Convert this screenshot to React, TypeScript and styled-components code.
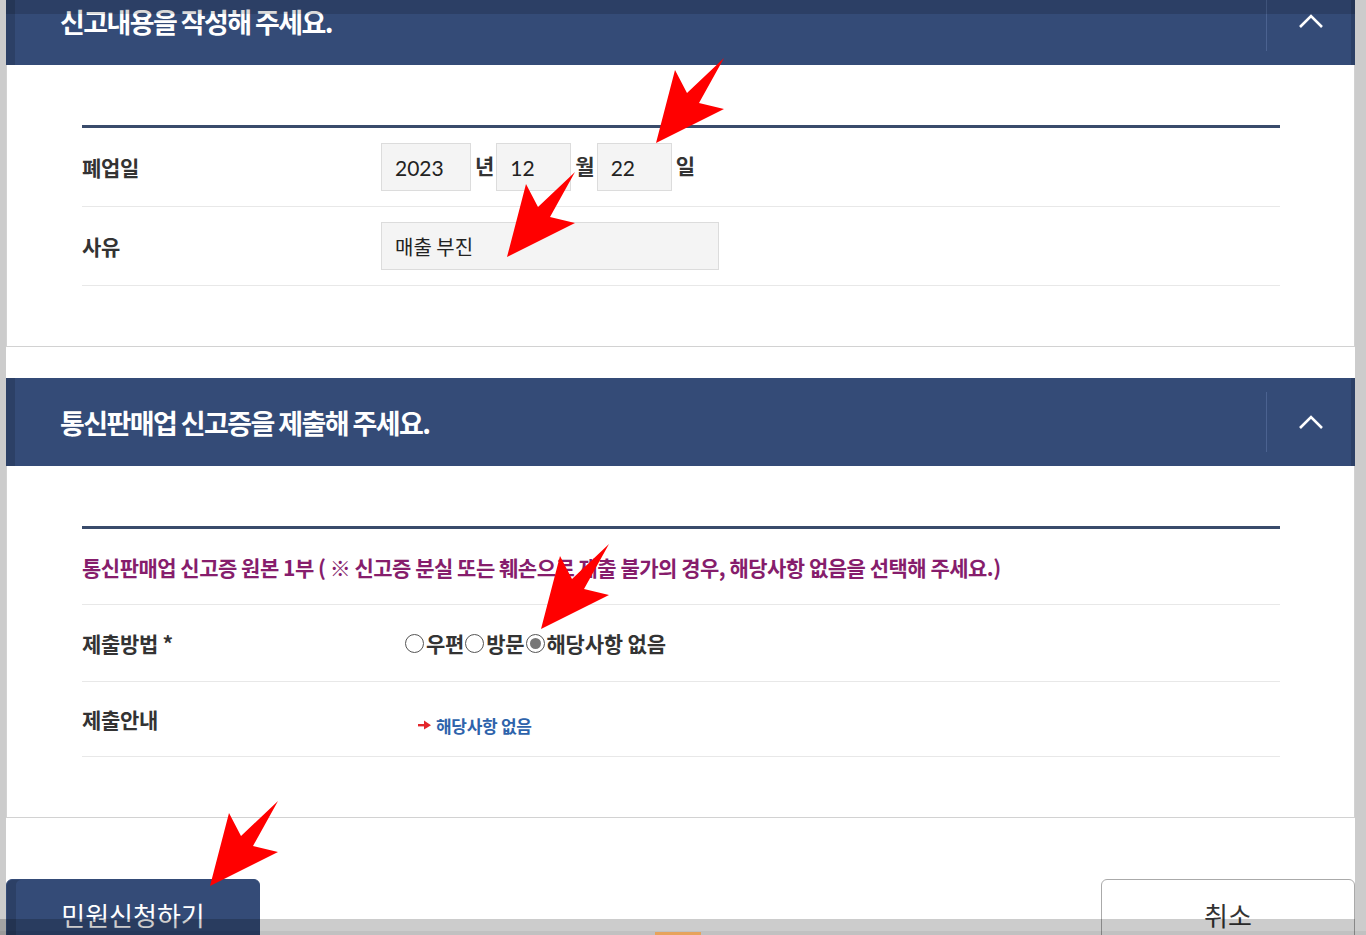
import React from "react";
import styled, { createGlobalStyle } from "styled-components";

const GlobalStyle = createGlobalStyle`
  html, body {
    margin: 0;
    padding: 0;
    background: #ffffff;
    overflow: hidden;
  }
  body {
    font-family: "Noto Sans CJK KR", "Noto Sans", sans-serif;
    color: #333;
  }
  * {
    box-sizing: border-box;
  }
`;

const Screen = styled.div`
  position: relative;
  width: 1366px;
  height: 935px;
  overflow: hidden;
`;

const Page = styled.div`
  width: 1349px;
  margin: -23px 0 0 6px;
  background: #fff;
`;

const Section = styled.section`
  margin-bottom: 31px;
`;

const SectionHead = styled.div`
  height: 88px;
  display: flex;
  align-items: center;
  justify-content: space-between;
  padding-left: 54px;
  background: #344b77;
  box-shadow: inset 9px 0 0 rgba(0, 0, 0, 0.14), inset -4px 0 0 rgba(0, 0, 0, 0.14);
`;

const SectionTitle = styled.h2`
  margin: 0;
  color: #fff;
  font-size: 27px;
  font-weight: 700;
  letter-spacing: -1.6px;
`;

const Toggle = styled.button`
  width: 89px;
  height: 60px;
  display: flex;
  align-items: center;
  justify-content: center;
  padding: 0;
  background: none;
  border: none;
  border-left: 1px solid #4b6290;
  cursor: pointer;
`;

const SectionBody = styled.div`
  border: 1px solid #d2d2d2;
  border-top: none;
  padding: 60px 74px 60px 75px;
`;

const Table = styled.div`
  border-top: 3px solid #394b6b;
`;

const Row = styled.div<{ $h: number }>`
  display: grid;
  grid-template-columns: 299px 1fr;
  align-items: center;
  height: ${(p) => p.$h}px;
  border-bottom: 1px solid #e8e8e8;
`;

const NoticeRow = styled.div`
  display: flex;
  align-items: center;
  height: 76px;
  border-bottom: 1px solid #e8e8e8;
  color: #861d6c;
  font-size: 21px;
  font-weight: 700;
  letter-spacing: -0.5px;
`;

const Label = styled.div`
  font-size: 21px;
  font-weight: 700;
  color: #333;
  letter-spacing: -0.3px;
`;

const Field = styled.div<{ $indent?: number }>`
  display: flex;
  align-items: center;
  padding-left: ${(p) => p.$indent ?? 0}px;
`;

const TextBox = styled.div<{ $w: number; $latin?: boolean }>`
  width: ${(p) => p.$w}px;
  height: 48px;
  display: flex;
  align-items: center;
  padding-left: 13px;
  background: #f4f4f4;
  border: 1px solid #dcdcdc;
  font-family: ${(p) =>
    p.$latin ? `"Lato", "Noto Sans CJK KR", sans-serif` : `"Noto Sans CJK KR", sans-serif`};
  font-size: ${(p) => (p.$latin ? 21 : 20)}px;
  color: #222;
`;

const Unit = styled.span`
  font-size: 21px;
  font-weight: 700;
  color: #333;
  margin: 0 2px 0 4px;
  position: relative;
  top: -2px;
`;

const RadioGroup = styled.div`
  display: flex;
  align-items: center;
  font-size: 21px;
  font-weight: 700;
  color: #333;
  letter-spacing: -0.2px;
`;

const RadioMark = styled.span<{ $checked?: boolean }>`
  width: 19px;
  height: 19px;
  margin: 0 2px 0 1px;
  border-radius: 50%;
  border: 1.5px solid #555;
  display: inline-flex;
  align-items: center;
  justify-content: center;
  &::after {
    content: "";
    width: 11px;
    height: 11px;
    border-radius: 50%;
    background: ${(p) => (p.$checked ? "#777" : "transparent")};
  }
`;

const GuideLink = styled.span`
  display: inline-flex;
  align-items: center;
  gap: 5px;
  color: #2e63ab;
  font-size: 17px;
  font-weight: 700;
  letter-spacing: -0.3px;
  margin-top: 12px;
`;

const Actions = styled.div`
  display: flex;
  justify-content: space-between;
  margin-top: 61px;
`;

const ActionButton = styled.button<{ $primary?: boolean }>`
  width: 254px;
  height: 72px;
  border-radius: 6px;
  font-family: "Noto Sans CJK KR", sans-serif;
  font-size: 26px;
  padding-top: 0;
  cursor: pointer;
  color: ${(p) => (p.$primary ? "#fff" : "#333")};
  background: ${(p) => (p.$primary ? "#344b77" : "#fff")};
  border: 1px solid ${(p) => (p.$primary ? "#344b77" : "#aaa")};
  box-shadow: ${(p) => (p.$primary ? "inset 9px 0 0 rgba(0, 0, 0, 0.14)" : "none")};
`;

/* screen frame drawn over the captured page */
const Shade = styled.div<{ $edge: "top" | "left" | "right" | "bottom" }>`
  position: absolute;
  background: rgba(0, 0, 0, ${(p) => (p.$edge === "top" ? 0.15 : 0.2)});
  ${(p) =>
    p.$edge === "top"
      ? "left: 6px; top: 0; width: 1349px; height: 14px;"
      : p.$edge === "left"
      ? "left: 0; top: 0; width: 6px; height: 935px;"
      : p.$edge === "right"
      ? "left: 1355px; top: 0; width: 11px; height: 919px;"
      : "left: 0; top: 919px; width: 1366px; height: 16px; border-bottom: 4px solid rgba(0,0,0,0.05);"}
`;

const TaskMark = styled.div`
  position: absolute;
  left: 655px;
  top: 932px;
  width: 46px;
  height: 3px;
  background: #e7a35c;
`;

const Pointer = styled.svg`
  position: absolute;
  width: 72px;
  height: 90px;
  overflow: visible;
`;

const ChevronUp = () => (
  <svg width="26" height="16" viewBox="0 0 26 16">
    <polyline points="2,14 13,3 24,14" fill="none" stroke="#fff" strokeWidth="2.6" />
  </svg>
);

const SmallArrow = () => (
  <svg width="13" height="10" viewBox="0 0 13 10">
    <rect x="0" y="4" width="7" height="2.4" fill="#e3262b" />
    <polygon points="6,0.5 13,5.2 6,9.5" fill="#e3262b" />
  </svg>
);

// big red annotation arrow; (x, y) is the tip
const RedArrow = ({ x, y }: { x: number; y: number }) => (
  <Pointer viewBox="0 -86 70 90" style={{ left: x, top: y - 86 }}>
    <polygon points="0,0 19,-73 31,-50 68,-85 43,-40 68,-34" fill="#ff0000" />
  </Pointer>
);

export default function App() {
  return (
    <Screen>
      <GlobalStyle />
      <Page>
        <Section>
          <SectionHead>
            <SectionTitle>신고내용을 작성해 주세요.</SectionTitle>
            <Toggle aria-label="접기">
              <ChevronUp />
            </Toggle>
          </SectionHead>
          <SectionBody>
            <Table>
              <Row $h={79}>
                <Label>폐업일</Label>
                <Field>
                  <TextBox $w={90} $latin>
                    2023
                  </TextBox>
                  <Unit>년</Unit>
                  <TextBox $w={75} $latin>
                    12
                  </TextBox>
                  <Unit>월</Unit>
                  <TextBox $w={75} $latin>
                    22
                  </TextBox>
                  <Unit>일</Unit>
                </Field>
              </Row>
              <Row $h={79}>
                <Label>사유</Label>
                <Field>
                  <TextBox $w={338}>매출 부진</TextBox>
                </Field>
              </Row>
            </Table>
          </SectionBody>
        </Section>

        <Section>
          <SectionHead>
            <SectionTitle>통신판매업 신고증을 제출해 주세요.</SectionTitle>
            <Toggle aria-label="접기">
              <ChevronUp />
            </Toggle>
          </SectionHead>
          <SectionBody>
            <Table>
              <NoticeRow>
                통신판매업 신고증 원본 1부 ( ※ 신고증 분실 또는 훼손으로 제출 불가의 경우, 해당사항 없음을 선택해 주세요.)
              </NoticeRow>
              <Row $h={77}>
                <Label>제출방법 *</Label>
                <Field $indent={23}>
                  <RadioGroup>
                    <RadioMark />
                    우편
                    <RadioMark />
                    방문
                    <RadioMark $checked />
                    해당사항 없음
                  </RadioGroup>
                </Field>
              </Row>
              <Row $h={75}>
                <Label>제출안내</Label>
                <Field $indent={37}>
                  <GuideLink>
                    <SmallArrow />
                    해당사항 없음
                  </GuideLink>
                </Field>
              </Row>
            </Table>
          </SectionBody>
        </Section>

        <Actions>
          <ActionButton $primary>민원신청하기</ActionButton>
          <ActionButton>취소</ActionButton>
        </Actions>
      </Page>

      <RedArrow x={655} y={143} />
      <RedArrow x={506} y={257} />
      <RedArrow x={540} y={629} />
      <RedArrow x={209} y={886} />

      <Shade $edge="top" />
      <Shade $edge="left" />
      <Shade $edge="right" />
      <Shade $edge="bottom" />
      <TaskMark />
    </Screen>
  );
}
